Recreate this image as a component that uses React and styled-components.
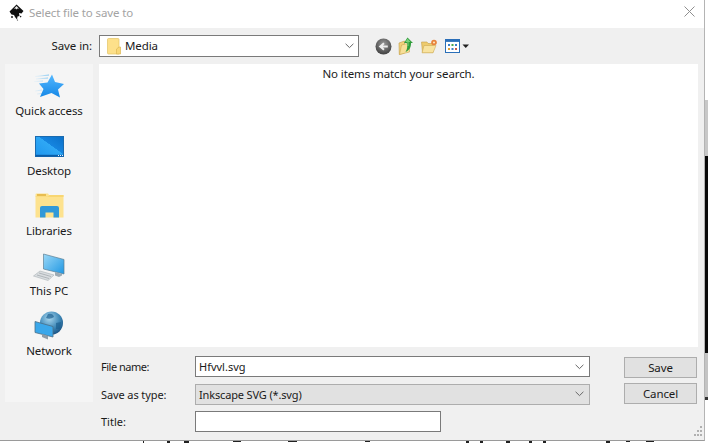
import React from "react";
import styled, { createGlobalStyle } from "styled-components";

const Global = createGlobalStyle`
  html, body { margin: 0; padding: 0; background: #fff; overflow: hidden; }
  * { box-sizing: border-box; }
`;

const Page = styled.div`
  width: 708px;
  height: 443px;
  display: flex;
  flex-direction: column;
  font-family: "Noto Sans", "Open Sans", sans-serif;
  font-size: 11.5px;
  color: #1a1a1a;
  overflow: hidden;
`;
const Upper = styled.div`
  display: flex;
  height: 441px;
`;
const Dialog = styled.div`
  width: 705px;
  height: 441px;
  display: flex;
  flex-direction: column;
  background: #f0f0f0;
  border-right: 1px solid #b4b4b4;
  border-bottom: 1px solid #9a9a9a;
`;
const EdgeStrip = styled.div`
  width: 3px;
  display: flex;
  flex-direction: column;
`;
const EdgePiece = styled.div`
  height: ${p => p.$h}px;
  background: ${p => p.$c};
`;
const BottomStrip = styled.svg`
  display: block;
  flex: none;
`;
const TitleBar = styled.div`
  height: 28px;
  background: #fff;
  display: flex;
  align-items: center;
  padding: 0 9px 4px 8px;
`;
const TitleText = styled.span`
  margin-left: 4px;
  color: #a3a3a3;
  flex: 1;
  letter-spacing: -0.12px;
`;
const CloseBox = styled.div`
  display: flex;
  margin-bottom: 1px;
`;
const Toolbar = styled.div`
  height: 36px;
  display: flex;
  align-items: center;
`;
const SaveInLabel = styled.label`
  width: 92px;
  text-align: right;
  margin-right: 7px;
  padding-bottom: 2px;
  letter-spacing: -0.1px;
`;
const LocationCombo = styled.div`
  width: 260px;
  height: 22px;
  background: #fff;
  border: 1px solid #7a7a7a;
  display: flex;
  align-items: center;
  padding: 0 4px 0 7px;
  gap: 4px;
`;
const ComboValue = styled.span`
  flex: 1;
  padding-bottom: 2px;
  letter-spacing: -0.1px;
`;
const ToolIcons = styled.div`
  display: flex;
  align-items: center;
  margin-left: 16px;
  gap: 6px;
`;
const ViewButton = styled.div`
  display: flex;
  margin-left: 1px;
`;
const Main = styled.div`
  flex: 1;
  display: flex;
  padding-left: 5px;
  min-height: 0;
`;
const Sidebar = styled.nav`
  width: 88px;
  height: 338px;
  background: #f5f5f5;
  display: flex;
  flex-direction: column;
  flex: none;
`;
const Place = styled.div`
  height: 60px;
  display: flex;
  flex-direction: column;
  align-items: center;
  justify-content: flex-end;
  padding-bottom: 6px;
  letter-spacing: -0.1px;
`;
const PlaceIcon = styled.div`
  display: flex;
  justify-content: center;
  margin-bottom: ${p => p.$gap}px;
`;
const RightPane = styled.div`
  margin-left: 6px;
  width: 599px;
  display: flex;
  flex-direction: column;
`;
const FileList = styled.div`
  height: 283px;
  background: #fff;
  text-align: center;
  padding-top: 2px;
  letter-spacing: -0.1px;
`;
const Form = styled.div`
  display: grid;
  grid-template-columns: 94px 395px 73px;
  grid-template-rows: 21px 21px 21px;
  row-gap: 6.5px;
  margin-top: 9px;
  padding-left: 2px;
  position: relative;
  font-size: 11px;
`;
const FieldLabel = styled.label`
  display: flex;
  align-items: center;
  letter-spacing: ${p => p.$spacing ?? 0}px;
`;
const Field = styled.div`
  height: 21px;
  display: flex;
  align-items: center;
  padding: 0 5px 0 3px;
  background: ${p => (p.$disabled ? "#e1e1e1" : "#fff")};
  border: 1px solid ${p => (p.$disabled ? "#adadad" : "#7a7a7a")};
  width: ${p => p.$w || 395}px;
`;
const FieldValue = styled.span`
  flex: 1;
  letter-spacing: ${p => p.$spacing ?? 0}px;
`;
const ButtonCell = styled.div`
  margin-left: 34px;
  width: 73px;
  padding-top: ${p => p.$top || 0}px;
  margin-top: ${p => p.$lift || 0}px;
`;
const Button = styled.button`
  display: block;
  width: 73px;
  height: 21px;
  background: #e1e1e1;
  border: 1px solid #adadad;
  font-family: inherit;
  font-size: 11.5px;
  color: #1a1a1a;
  padding: 0;
  letter-spacing: -0.1px;
`;
const Grip = styled.svg`
  position: absolute;
  right: -4px;
  bottom: -5px;
`;
const ChevronSvg = styled.svg`
  flex: none;
`;
const FolderSvg = styled.svg`
  flex: none;
`;

const Chevron = () => (
  <ChevronSvg width="9" height="6" viewBox="0 0 9 6">
    <polyline points="0.6,0.8 4.5,4.6 8.4,0.8" fill="none" stroke="#666" strokeWidth="1" />
  </ChevronSvg>
);

const InkscapeLogo = () => (
  <svg width="17" height="17" viewBox="0 0 17 17">
    <path d="M8.5 0.5 L15.5 7 L13.5 9.5 L11 9 L11.5 12 L9.5 12.5 L9 15.5 L7 13 L6 11 L3.5 10.5 L1.5 7.5 Z" fill="#111" />
    <path d="M8.5 2 L11 4.8 L9.4 4.4 L8.5 5.6 L7.6 4.4 L6 4.8 Z" fill="#eee" />
    <circle cx="4" cy="13" r="1" fill="#222" />
    <circle cx="12.6" cy="12.6" r="0.8" fill="#222" />
    <circle cx="9.5" cy="16" r="0.6" fill="#333" />
  </svg>
);

const CloseIcon = () => (
  <svg width="11" height="11" viewBox="0 0 11 11">
    <path d="M0.5 0.5 L10.5 10.5 M10.5 0.5 L0.5 10.5" stroke="#8f8f8f" strokeWidth="1" fill="none" />
  </svg>
);

const FolderSmall = () => (
  <FolderSvg width="14" height="17" viewBox="0 0 14 17">
    <path d="M0.5 1.5 Q0.5 0.5 1.5 0.5 H11 Q12 0.5 12 1.5 V16 H1.5 Q0.5 16 0.5 15 Z" fill="#fde08a" stroke="#e3c466" strokeWidth="0.7" />
    <path d="M12 9 H13.5 V16 H9.5 V11 Z" fill="#f9d878" stroke="#dcb755" strokeWidth="0.7" />
  </FolderSvg>
);

const BackIcon = () => (
  <svg width="17" height="17" viewBox="0 0 17 17">
    <defs>
      <radialGradient id="bk" cx="50%" cy="35%" r="70%">
        <stop offset="0" stopColor="#9a9a9a" />
        <stop offset="1" stopColor="#3a3a3a" />
      </radialGradient>
    </defs>
    <circle cx="8.5" cy="8.5" r="8" fill="url(#bk)" />
    <path d="M12.8 8.5 H6.5 M9 5.2 L5.2 8.5 L9 11.8" stroke="#eee" strokeWidth="2" fill="none" />
  </svg>
);

const UpIcon = () => (
  <svg width="17" height="18" viewBox="0 0 16 18">
    <path d="M0.5 6 L6 4 V16 L0.8 17.5 Z" fill="#f3d27a" stroke="#bd9a45" strokeWidth="0.6" />
    <path d="M3 8 L11 6 V15 L1 17.5 Z" fill="#f7df98" stroke="#c9a650" strokeWidth="0.6" />
    <path d="M9 0.5 L14.5 6 H12.5 C12.5 10 11.5 13 7 15 C9 12 9 9 8.5 6 H5.5 Z" fill="#2f9c3a" />
    <path d="M9 1.5 L12 5 H10 V9 H9 V5 H7 Z" fill="#7bd07b" />
  </svg>
);

const NewFolderIcon = () => (
  <svg width="17" height="15" viewBox="0 0 17 15">
    <path d="M0.5 3 H6 L7 4.5 H12 V13.5 H1.5 Z" fill="#eecb6d" stroke="#c4a04a" strokeWidth="0.6" />
    <path d="M3 6.5 H15 L12 13.8 H1 Z" fill="#f8e3a0" stroke="#cdaa55" strokeWidth="0.6" />
    <circle cx="13" cy="3.5" r="2.8" fill="#e8823a" />
    <circle cx="13" cy="3.5" r="1.1" fill="#fbe2b8" />
  </svg>
);

const ViewIcon = () => (
  <svg width="25" height="14" viewBox="0 0 25 14">
    <rect x="0.5" y="0.5" width="14" height="13" fill="#fff" stroke="#2a6fb8" />
    <rect x="0.5" y="0.5" width="14" height="2.4" fill="#2a6fb8" />
    <rect x="3" y="5" width="2" height="2" fill="#3a7fc8" />
    <rect x="6.5" y="5" width="2" height="2" fill="#4aa84a" />
    <rect x="10" y="5" width="2" height="2" fill="#3a7fc8" />
    <rect x="3" y="9" width="2" height="2" fill="#e0a030" />
    <rect x="6.5" y="9" width="2" height="2" fill="#3a7fc8" />
    <rect x="10" y="9" width="2" height="2" fill="#c85a4a" />
    <path d="M17.5 5.5 H24 L20.75 9 Z" fill="#222" />
  </svg>
);

const StarIcon = () => (
  <svg width="30" height="26" viewBox="0 0 30 26">
    <defs>
      <linearGradient id="st" x1="0" y1="0" x2="0" y2="1">
        <stop offset="0" stopColor="#55b8ff" />
        <stop offset="1" stopColor="#1487e6" />
      </linearGradient>
      <linearGradient id="sk" x1="0" y1="0" x2="1" y2="0">
        <stop offset="0" stopColor="#cfe8f8" stopOpacity="0.2" />
        <stop offset="1" stopColor="#7cc4f2" />
      </linearGradient>
    </defs>
    <path d="M1 2.5 L15 1 M2 5 L14 4 M0 7.5 L9 7 M1 17 L8 16 M3 20 L8 19.5" stroke="url(#sk)" strokeWidth="1" fill="none" />
    <path d="M18 0.5 L21 8 L30 10 L24 15.5 L26 23.5 L17.5 19 L6 23 L9.5 15 L5 9.5 L13.5 8.5 Z" fill="url(#st)" />
  </svg>
);

const DesktopIcon = () => (
  <svg width="29" height="21" viewBox="0 0 29 21">
    <defs>
      <linearGradient id="dk" x1="0" y1="1" x2="1" y2="0">
        <stop offset="0" stopColor="#1e96ee" />
        <stop offset="0.55" stopColor="#2fa8f5" />
        <stop offset="0.56" stopColor="#1585e0" />
        <stop offset="1" stopColor="#0b70c8" />
      </linearGradient>
    </defs>
    <rect x="0.5" y="0.5" width="28" height="20" fill="url(#dk)" stroke="#1a6bb0" />
    <rect x="0.5" y="18.8" width="28" height="1.7" fill="#0a5da8" />
    <path d="M23 19.5 H28" stroke="#e6f3ff" strokeDasharray="1 1" />
  </svg>
);

const LibrariesIcon = () => (
  <svg width="29" height="25" viewBox="0 0 29 25">
    <path d="M0.5 1.5 Q0.5 0.5 1.5 0.5 H13 L14 2 H28.5 V24.5 H0.5 Z" fill="#fde28e" />
    <path d="M0.5 3.5 H13 L14.5 2 H28.5 V4 H0.5 Z" fill="#f8d672" />
    <rect x="2" y="1" width="9" height="2" fill="#e8bd50" />
    <path d="M5 24.5 V15 Q5 13 7 13 H22 Q24 13 24 15 V24.5 H18.5 V19.5 H10.5 V24.5 Z" fill="#3199d8" />
  </svg>
);

const ThisPcIcon = () => (
  <svg width="32" height="30" viewBox="0 0 32 30">
    <defs>
      <linearGradient id="pc" x1="0" y1="0" x2="1" y2="1">
        <stop offset="0" stopColor="#9bd8f7" />
        <stop offset="1" stopColor="#1f97e3" />
      </linearGradient>
    </defs>
    <path d="M10.5 1 L31 6.5 V21 L10.5 16 Z" fill="url(#pc)" stroke="#5d7f93" strokeWidth="0.7" />
    <path d="M22 19 V22.5 L26 24 L29 22.5 V21 Z" fill="#9daab3" />
    <path d="M7 18 L21 22 L15 27.5 L0.5 23 Z" fill="#d9dde0" stroke="#aab1b6" strokeWidth="0.6" />
    <path d="M6 20 L18 23.5 M4 22 L16 25.5" stroke="#a5abaf" strokeWidth="0.8" />
  </svg>
);

const NetworkIcon = () => (
  <svg width="30" height="29" viewBox="0 0 30 29">
    <defs>
      <radialGradient id="gl" cx="40%" cy="30%" r="75%">
        <stop offset="0" stopColor="#a8d6ee" />
        <stop offset="0.6" stopColor="#3f89b8" />
        <stop offset="1" stopColor="#174f80" />
      </radialGradient>
    </defs>
    <circle cx="17.5" cy="12" r="11.5" fill="url(#gl)" />
    <path d="M14 3 Q19 2 20 6 Q16 9 12 7 Z M22 12 L27 11 L26 18 L22 18 Z" fill="#1d5f90" opacity="0.7" />
    <path d="M1 10.5 L19 15.5 V26 L1 21.5 Z" fill="#3aa7ea" stroke="#4d6f85" strokeWidth="0.8" />
    <path d="M8 23 V26 L14 28.5 V25 Z" fill="#8f9ca6" />
  </svg>
);

const bottomMarks = [
  [143, 1, 3], [167, 3, 2], [184, 5, 2], [233, 8, 1], [288, 9, 1], [365, 5, 1],
  [466, 3, 2], [480, 3, 2], [506, 4, 2], [529, 3, 2], [543, 3, 2], [606, 4, 2], [626, 4, 1], [646, 8, 1],
];

const places = [
  { label: "Quick access", icon: <StarIcon />, gap: 3 },
  { label: "Desktop", icon: <DesktopIcon />, gap: 6 },
  { label: "Libraries", icon: <LibrariesIcon />, gap: 5 },
  { label: "This PC", icon: <ThisPcIcon />, gap: 0 },
  { label: "Network", icon: <NetworkIcon />, gap: 3 },
];

export default function App() {
  return (
    <Page>
      <Global />
      <Upper>
        <Dialog>
          <TitleBar>
            <InkscapeLogo />
            <TitleText>Select file to save to</TitleText>
            <CloseBox><CloseIcon /></CloseBox>
          </TitleBar>
          <Toolbar>
            <SaveInLabel>Save in:</SaveInLabel>
            <LocationCombo>
              <FolderSmall />
              <ComboValue>Media</ComboValue>
              <Chevron />
            </LocationCombo>
            <ToolIcons>
              <BackIcon />
              <UpIcon />
              <NewFolderIcon />
              <ViewButton><ViewIcon /></ViewButton>
            </ToolIcons>
          </Toolbar>
          <Main>
            <Sidebar>
              {places.map(p => (
                <Place key={p.label}>
                  <PlaceIcon $gap={p.gap}>{p.icon}</PlaceIcon>
                  {p.label}
                </Place>
              ))}
            </Sidebar>
            <RightPane>
              <FileList>No items match your search.</FileList>
              <Form>
                <FieldLabel $spacing={-0.5}>File name:</FieldLabel>
                <Field>
                  <FieldValue>Hfvvl.svg</FieldValue>
                  <Chevron />
                </Field>
                <ButtonCell $top={1}><Button>Save</Button></ButtonCell>
                <FieldLabel $spacing={-0.1}>Save as type:</FieldLabel>
                <Field $disabled>
                  <FieldValue $spacing={-0.15}>Inkscape SVG (*.svg)</FieldValue>
                  <Chevron />
                </Field>
                <ButtonCell $lift={-1}><Button>Cancel</Button></ButtonCell>
                <FieldLabel>Title:</FieldLabel>
                <Field $w={246} />
                <div />
                <Grip width="8" height="12" viewBox="0 0 8 12">
                  <path d="M6 1h2v2h-2z M6 5h2v2h-2z M6 9h2v2h-2z M3 5h2v2h-2z M3 9h2v2h-2z M0 9h2v2h-2z" fill="#b0b0b0" />
                </Grip>
              </Form>
            </RightPane>
          </Main>
        </Dialog>
        <EdgeStrip>
          <EdgePiece $h={100} $c="#ffffff" />
          <EdgePiece $h={56} $c="#c8c8c8" />
          <EdgePiece $h={197} $c="#0a0a0a" />
          <EdgePiece $h={44} $c="#c4c4c4" />
          <EdgePiece $h={3} $c="#333" />
          <EdgePiece $h={41} $c="#ffffff" />
        </EdgeStrip>
      </Upper>
      <BottomStrip width="708" height="2" viewBox="0 0 708 2">
        {bottomMarks.map(([x, w, h]) => (
          <rect key={x} x={x} y={0} width={w} height={h} fill="#222" />
        ))}
      </BottomStrip>
    </Page>
  );
}
